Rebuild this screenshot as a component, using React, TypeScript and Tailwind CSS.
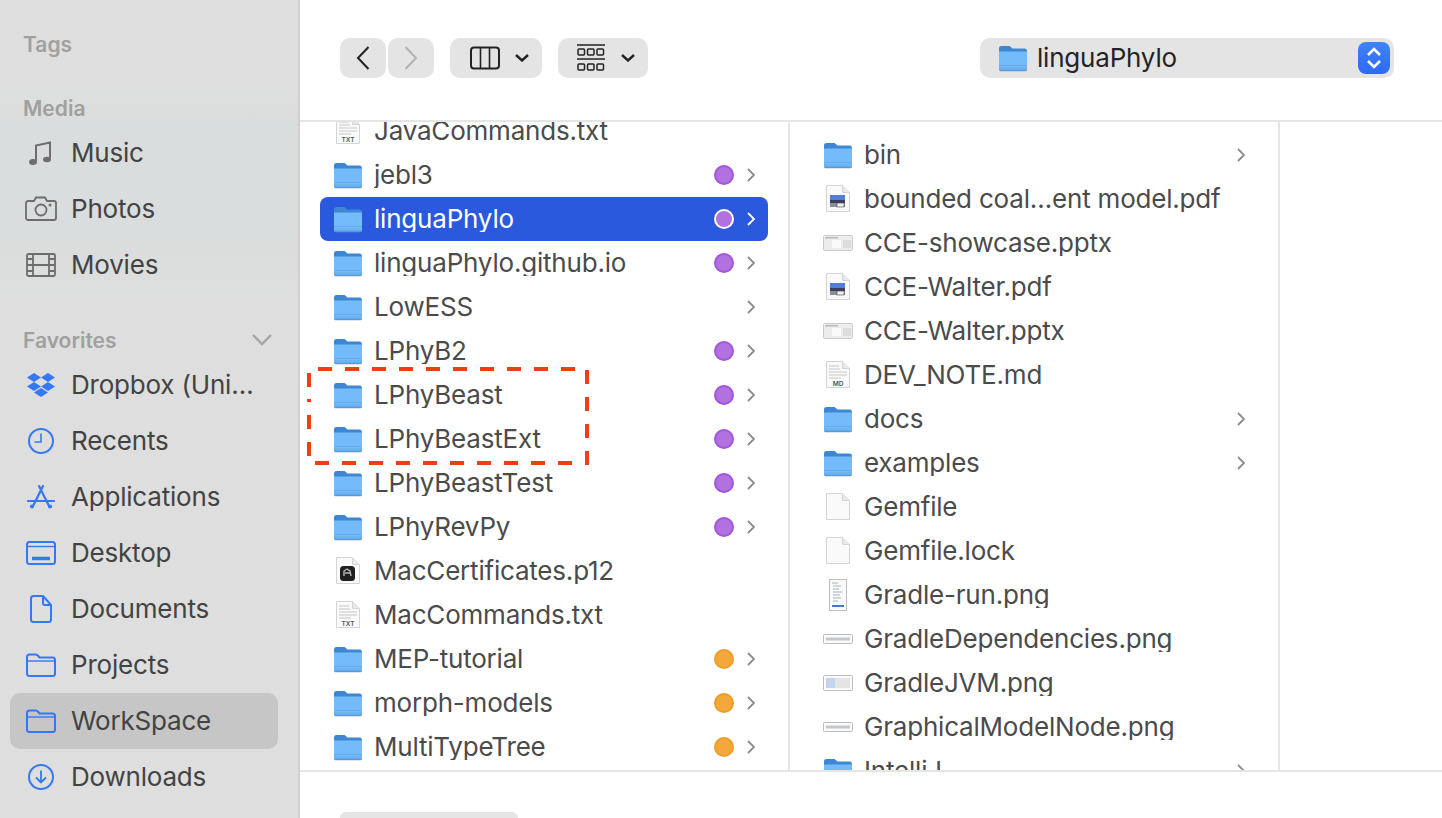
import React from 'react';
import { FaDropbox } from 'react-icons/fa';

const FONT = "font-['Inter','Liberation_Sans',sans-serif]";

const FolderIcon = ({ small = false }: { small?: boolean }) => (
  <svg width={small ? 29 : 30} height="28" viewBox="0 0 30 28" className="shrink-0">
    <path d="M1 4.5C1 2.8 2 2 3.5 2h7c1.2 0 1.8.4 2.6 1.2l1.3 1.3H26.5C28 4.5 29 5.5 29 7v3H1z" fill="#3f87d3" />
    <path d="M1 7.5h28V25c0 1.3-.8 2-2 2H3c-1.2 0-2-.7-2-2z" fill="#74bbfb" />
    <rect x="1" y="21" width="28" height="1" fill="#64abee" />
    <rect x="1" y="23.5" width="28" height="1" fill="#64abee" />
    <path d="M1 25.5h28c0 1-.8 1.8-2 1.8H3c-1.2 0-2-.8-2-1.8z" fill="#5b9ad6" />
  </svg>
);

const DocShape = () => (
  <>
    <path d="M3.5 1.5h16l7 7v19h-23z" fill="#fafafa" stroke="#d4d4d4" strokeWidth="1" />
    <path d="M19.5 1.5v7h7" fill="#e9e9e9" stroke="#d4d4d4" strokeWidth="1" />
  </>
);

const TextDocIcon = ({ label }: { label: string }) => (
  <svg width="30" height="30" viewBox="0 0 30 30" className="shrink-0">
    <DocShape />
    <path d="M6 6h10M6 9h11M6 12h18M6 15h18M6 18h12" stroke="#c6c6c6" strokeWidth="1" />
    <text x="15" y="26" textAnchor="middle" fontSize="6.5" fontWeight="600" fill="#555" fontFamily="Inter, sans-serif">{label}</text>
  </svg>
);

const P12Icon = () => (
  <svg width="30" height="30" viewBox="0 0 30 30" className="shrink-0">
    <DocShape />
    <rect x="7" y="10" width="15" height="15" rx="3.5" fill="#1f1f1f" />
    <path d="M11 20v-5l3-2 3 2 1 5M12 17h5" stroke="#b8b8b8" strokeWidth="1.4" fill="none" />
  </svg>
);

const PdfIcon = () => (
  <svg width="30" height="30" viewBox="0 0 30 30" className="shrink-0">
    <DocShape />
    <rect x="7" y="11" width="15" height="5" fill="#4f7fd6" />
    <rect x="7" y="16" width="15" height="3" fill="#3b3f5c" />
    <rect x="7" y="19" width="15" height="4" fill="#8b8f9c" />
    <rect x="14" y="19" width="7" height="4" fill="#f0f0f0" stroke="#444" strokeWidth=".6" />
  </svg>
);

const SlideIcon = () => (
  <svg width="30" height="30" viewBox="0 0 30 30" className="shrink-0">
    <rect x="0.5" y="7.5" width="29" height="15" rx="1" fill="#ececec" stroke="#c9c9c9" />
    <rect x="2" y="9" width="13" height="1.5" fill="#b9b9b9" />
    <rect x="9" y="12" width="9" height="8" fill="#fafafa" />
    <rect x="20" y="12" width="8" height="8" fill="#dcdcdc" />
  </svg>
);

const WideIcon = () => (
  <svg width="30" height="30" viewBox="0 0 30 30" className="shrink-0">
    <rect x="0.5" y="10.5" width="29" height="9" rx="1" fill="#fafafa" stroke="#bdbdbd" />
    <rect x="3" y="13.5" width="24" height="3" fill="#c4c8cc" />
  </svg>
);

const JvmIcon = () => (
  <svg width="30" height="30" viewBox="0 0 30 30" className="shrink-0">
    <rect x="0.5" y="7.5" width="29" height="15" rx="1" fill="#fafafa" stroke="#bdbdbd" />
    <rect x="3" y="10" width="24" height="10" fill="#e4e4e4" />
    <rect x="3" y="10" width="9" height="10" fill="#c2d4ee" />
  </svg>
);

const TallIcon = () => (
  <svg width="30" height="32" viewBox="0 0 30 32" className="shrink-0">
    <rect x="6.5" y="0.5" width="17" height="31" fill="#fafafa" stroke="#bdbdbd" />
    <path d="M9 4h6M10 7h8M10 10h6M10 13h9M10 16h7M10 19h8M10 22h5" stroke="#a9b4c4" strokeWidth="1" />
    <rect x="9" y="26" width="12" height="2" fill="#3f78d6" />
  </svg>
);

const BlankIcon = () => (
  <svg width="30" height="30" viewBox="0 0 30 30" className="shrink-0">
    <DocShape />
  </svg>
);

type IconKind = 'folder' | 'txt' | 'md' | 'p12' | 'pdf' | 'slide' | 'blank' | 'tall' | 'wide' | 'jvm';

const fileIcon = (kind: IconKind) => {
  switch (kind) {
    case 'folder': return <FolderIcon />;
    case 'txt': return <TextDocIcon label="TXT" />;
    case 'md': return <TextDocIcon label="MD" />;
    case 'p12': return <P12Icon />;
    case 'pdf': return <PdfIcon />;
    case 'slide': return <SlideIcon />;
    case 'blank': return <BlankIcon />;
    case 'tall': return <TallIcon />;
    case 'wide': return <WideIcon />;
    case 'jvm': return <JvmIcon />;
  }
};

type Row = { name: string; icon: IconKind; tag?: 'purple' | 'orange'; more?: boolean; selected?: boolean };

const leftRows: Row[] = [
  { name: 'JavaCommands.txt', icon: 'txt' },
  { name: 'jebl3', icon: 'folder', tag: 'purple', more: true },
  { name: 'linguaPhylo', icon: 'folder', tag: 'purple', more: true, selected: true },
  { name: 'linguaPhylo.github.io', icon: 'folder', tag: 'purple', more: true },
  { name: 'LowESS', icon: 'folder', more: true },
  { name: 'LPhyB2', icon: 'folder', tag: 'purple', more: true },
  { name: 'LPhyBeast', icon: 'folder', tag: 'purple', more: true },
  { name: 'LPhyBeastExt', icon: 'folder', tag: 'purple', more: true },
  { name: 'LPhyBeastTest', icon: 'folder', tag: 'purple', more: true },
  { name: 'LPhyRevPy', icon: 'folder', tag: 'purple', more: true },
  { name: 'MacCertificates.p12', icon: 'p12' },
  { name: 'MacCommands.txt', icon: 'txt' },
  { name: 'MEP-tutorial', icon: 'folder', tag: 'orange', more: true },
  { name: 'morph-models', icon: 'folder', tag: 'orange', more: true },
  { name: 'MultiTypeTree', icon: 'folder', tag: 'orange', more: true },
];

const rightRows: Row[] = [
  { name: 'bin', icon: 'folder', more: true },
  { name: 'bounded coal…ent model.pdf', icon: 'pdf' },
  { name: 'CCE-showcase.pptx', icon: 'slide' },
  { name: 'CCE-Walter.pdf', icon: 'pdf' },
  { name: 'CCE-Walter.pptx', icon: 'slide' },
  { name: 'DEV_NOTE.md', icon: 'md' },
  { name: 'docs', icon: 'folder', more: true },
  { name: 'examples', icon: 'folder', more: true },
  { name: 'Gemfile', icon: 'blank' },
  { name: 'Gemfile.lock', icon: 'blank' },
  { name: 'Gradle-run.png', icon: 'tall' },
  { name: 'GradleDependencies.png', icon: 'wide' },
  { name: 'GradleJVM.png', icon: 'jvm' },
  { name: 'GraphicalModelNode.png', icon: 'wide' },
  { name: 'IntelliJ', icon: 'folder', more: true },
];

const FileRow = ({ row }: { row: Row }) => (
  <div className={`ml-5 flex h-11 w-[448px] shrink-0 items-center rounded-lg pl-[13px] pr-[13px] ${row.selected ? 'bg-[#2b59de] text-white' : 'text-[#4b4b4b]'}`}>
    {fileIcon(row.icon)}
    <span className="ml-[11px] flex-1 truncate text-[26px] leading-none tracking-[-0.2px]">{row.name}</span>
    {row.tag && (
      <span
        className={`mr-[13px] size-5 rounded-full border-2 ${
          row.tag === 'orange'
            ? 'border-[#f09c22] bg-[#f4a83c]'
            : row.selected
              ? 'border-white bg-[#b172df]'
              : 'border-[#a354dc] bg-[#b172df]'
        }`}
      />
    )}
    {row.more ? (
      <svg width="8" height="14" viewBox="0 0 8 14" fill="none" className="shrink-0">
        <path d="M1 1l6 6-6 6" stroke={row.selected ? '#ffffff' : '#8c8c8c'} strokeWidth="1.8" />
      </svg>
    ) : (
      <span className="w-2" />
    )}
  </div>
);

const blue = '#3478f6';

const sideIcons: Record<string, React.ReactNode> = {
  Music: (
    <svg width="28" height="28" viewBox="0 0 28 28" fill="none">
      <path d="M9 22V6.5L23 3.5V19" stroke="#6d6d6d" strokeWidth="2" />
      <ellipse cx="6" cy="23" rx="4" ry="3" fill="#6d6d6d" />
      <ellipse cx="20" cy="20.5" rx="4" ry="2.8" fill="#6d6d6d" />
    </svg>
  ),
  Photos: (
    <svg width="32" height="26" viewBox="0 0 32 26" fill="none" stroke="#6d6d6d" strokeWidth="1.8">
      <path d="M3 5h6l2-3.5h9L22 5h7c1 0 2 1 2 2v15c0 1-1 2-2 2H3c-1 0-2-1-2-2V7c0-1 1-2 2-2z" />
      <circle cx="16" cy="14" r="5.5" />
      <circle cx="25" cy="9" r=".6" fill="#6d6d6d" />
    </svg>
  ),
  Movies: (
    <svg width="30" height="24" viewBox="0 0 30 24" fill="none" stroke="#6d6d6d" strokeWidth="1.8">
      <rect x="1" y="1" width="28" height="22" rx="1.5" />
      <path d="M7 1v22M23 1v22M7 12h16M1 6h6M1 12h6M1 18h6M23 6h6M23 12h6M23 18h6" />
    </svg>
  ),
  'Dropbox (Uni…': <FaDropbox size={28} color={blue} />,
  Recents: (
    <svg width="28" height="28" viewBox="0 0 28 28" fill="none" stroke={blue} strokeWidth="2">
      <circle cx="14" cy="14" r="12" />
      <path d="M14 6.5V15H7.5" strokeWidth="1.6" />
    </svg>
  ),
  Applications: (
    <svg width="28" height="24" viewBox="0 0 28 24" fill="none" stroke={blue} strokeWidth="2.2" strokeLinecap="round">
      <path d="M12 1l10 20M16 1L6 21M1 16h26" />
      <circle cx="5" cy="21.5" r="1" fill={blue} />
      <circle cx="23" cy="21.5" r="1" fill={blue} />
    </svg>
  ),
  Desktop: (
    <svg width="30" height="24" viewBox="0 0 30 24" fill="none" stroke={blue} strokeWidth="2">
      <rect x="1" y="1" width="28" height="22" rx="2.5" />
      <path d="M1 5.5h28" strokeWidth="1.4" />
      <path d="M6 17.5h18" strokeWidth="3.5" />
    </svg>
  ),
  Documents: (
    <svg width="22" height="28" viewBox="0 0 22 28" fill="none" stroke={blue} strokeWidth="2" strokeLinejoin="round">
      <path d="M3.5 1H13l8 9v14.5c0 1.4-1 2.5-2.5 2.5h-15C2 27 1 25.900 1 24.500V3.500C1 2 2 1 3.500 1z" />
      <path d="M13 1v7c0 1.500.7 2 2 2h6" />
    </svg>
  ),
  Projects: <OutlineFolder />,
  WorkSpace: <OutlineFolder />,
  Downloads: (
    <svg width="28" height="28" viewBox="0 0 28 28" fill="none" stroke={blue} strokeWidth="2">
      <circle cx="14" cy="14" r="12" />
      <path d="M14 7.500V19M9 14.500l5 5 5-5" strokeWidth="1.800" />
    </svg>
  ),
};

function OutlineFolder() {
  return (
    <svg width="30" height="24" viewBox="0 0 30 24" fill="none" stroke={blue} strokeWidth="2" strokeLinejoin="round">
      <path d="M1 6V4c0-1.500 1-2.500 2.500-2.500h6c1 0 1.500.3 2.300 1L13.500 4.500H26.500C28 4.500 29 5.500 29 7v13.500c0 1.500-1 2.500-2.500 2.500h-23C2 23 1 22 1 20.500z" />
      <path d="M1 8h28" strokeWidth="1.400" />
    </svg>
  );
}

const SideItem = ({ label, active }: { label: string; active?: boolean }) => (
  <div className={`mx-[10px] flex h-14 w-[268px] items-center rounded-[10px] pl-[14px] ${active ? 'bg-[#c6c6c6]' : ''}`}>
    <span className="flex w-[34px] shrink-0 items-center justify-center">{sideIcons[label]}</span>
    <span className="ml-[13px] text-[26px] leading-none tracking-[-0.2px] text-[#434343]">{label}</span>
  </div>
);

const SideHeading = ({ label }: { label: string }) => (
  <div className="flex h-8 items-center pl-[23px] text-[21px] font-semibold leading-none text-[#a0a0a0]">{label}</div>
);

const ChevronDown = () => (
  <svg width="14" height="8" viewBox="0 0 14 8" fill="none">
    <path d="M1 1l6 5.500L13 1" stroke="#222" strokeWidth="2.400" />
  </svg>
);

export default function App() {
  return (
    <div className={`relative flex h-screen w-full overflow-hidden bg-white ${FONT}`}>
      {/* sidebar */}
      <aside className="flex h-full w-[300px] shrink-0 flex-col border-r-2 border-[#cfcfcf] bg-[linear-gradient(180deg,#dedede_0%,#dedede_10%,#d9dddd_18%,#dadddd_28%,#dedede_38%,#dedede_100%)] pt-7">
        <SideHeading label="Tags" />
        <div className="mt-8">
          <SideHeading label="Media" />
        </div>
        <div className="mt-px">
          <SideItem label="Music" />
          <SideItem label="Photos" />
          <SideItem label="Movies" />
        </div>
        <div className="relative mt-[31px]">
          <SideHeading label="Favorites" />
          <svg width="20" height="12" viewBox="0 0 20 12" fill="none" className="absolute right-[26px] top-[10px]">
            <path d="M1 1l9 9 9-9" stroke="#a6a6a6" strokeWidth="2.400" />
          </svg>
        </div>
        <div className="mt-px">
          <SideItem label="Dropbox (Uni…" />
          <SideItem label="Recents" />
          <SideItem label="Applications" />
          <SideItem label="Desktop" />
          <SideItem label="Documents" />
          <SideItem label="Projects" />
          <SideItem label="WorkSpace" active />
          <SideItem label="Downloads" />
        </div>
      </aside>

      {/* main */}
      <main className="flex min-w-0 flex-1 flex-col">
        <header className="flex h-[122px] shrink-0 items-start border-b-2 border-[#e5e5e5] pl-10 pt-[38px]">
          <div className="flex gap-[2px]">
            <button className="flex h-10 w-[46px] items-center justify-center rounded-[10px] bg-[#e4e4e4]">
              <svg width="14" height="24" viewBox="0 0 14 24" fill="none"><path d="M12.500 1L2 12l10.500 11" stroke="#222" strokeWidth="2" /></svg>
            </button>
            <button className="flex h-10 w-[46px] items-center justify-center rounded-[10px] bg-[#e4e4e4]">
              <svg width="14" height="24" viewBox="0 0 14 24" fill="none"><path d="M1.500 1L12 12 1.500 23" stroke="#b2b2b2" strokeWidth="2" /></svg>
            </button>
          </div>
          <button className="ml-4 flex h-10 w-[92px] items-center rounded-[10px] bg-[#e4e4e4] pl-5">
            <svg width="30" height="24" viewBox="0 0 30 24" fill="none" stroke="#222" strokeWidth="2">
              <rect x="1" y="1.500" width="28" height="21" rx="3" />
              <path d="M10.500 1.500v21M19.500 1.500v21" strokeWidth="1.600" />
            </svg>
            <span className="ml-[15px]"><ChevronDown /></span>
          </button>
          <button className="ml-4 flex h-10 w-[90px] items-center rounded-[10px] bg-[#e4e4e4] pl-[19px]">
            <svg width="28" height="28" viewBox="0 0 28 28" fill="none" stroke="#222">
              <path d="M0 1h28M0 15h28" strokeWidth="1.600" />
              <g strokeWidth="1.500">
                <rect x="1" y="5" width="6.500" height="6" rx="1" />
                <rect x="10.500" y="5" width="6.500" height="6" rx="1" />
                <rect x="20" y="5" width="6.500" height="6" rx="1" />
                <rect x="1" y="20" width="6.500" height="6" rx="1" />
                <rect x="10.500" y="20" width="6.500" height="6" rx="1" />
                <rect x="20" y="20" width="6.500" height="6" rx="1" />
              </g>
            </svg>
            <span className="ml-4"><ChevronDown /></span>
          </button>
          <div className="ml-[332px] flex h-10 w-[414px] items-center rounded-[10px] bg-[#e4e4e4] pl-[18px] pr-1">
            <FolderIcon />
            <span className="ml-[9px] flex-1 text-[26px] leading-none tracking-[-0.2px] text-[#242424]">linguaPhylo</span>
            <span className="flex size-8 items-center justify-center rounded-lg bg-[linear-gradient(180deg,#3f83f7,#2f69f5)]">
              <svg width="16" height="24" viewBox="0 0 16 24" fill="none" stroke="#fff" strokeWidth="2.600">
                <path d="M2 9l6-6 6 6M2 15l6 6 6-6" />
              </svg>
            </span>
          </div>
        </header>

        <div className="flex min-h-0 flex-1">
          <section className="h-full w-[490px] shrink-0 overflow-hidden border-r-2 border-[#e5e5e5]">
            <div className="-mt-[13px]">
              {leftRows.map((row) => <FileRow key={row.name} row={row} />)}
            </div>
          </section>
          <section className="h-full w-[490px] shrink-0 overflow-hidden border-r-2 border-[#e5e5e5] pt-[11px]">
            {rightRows.map((row) => <FileRow key={row.name} row={row} />)}
          </section>
        </div>

        <footer className="flex h-[48px] shrink-0 flex-col justify-end border-t-2 border-[#e5e5e5] pl-10">
          <div className="h-[6px] w-[178px] rounded-t-lg bg-[#e5e5e5]" />
        </footer>
      </main>

      {/* annotation drawn over the file list */}
      <svg width="282" height="98" viewBox="0 0 282 98" fill="none" className="absolute left-[307px] top-[367px]">
        <path d="M2 20V2H280V96H2V32" stroke="#ef3e12" strokeWidth="4" strokeDasharray="14 13" />
      </svg>
    </div>
  );
}
